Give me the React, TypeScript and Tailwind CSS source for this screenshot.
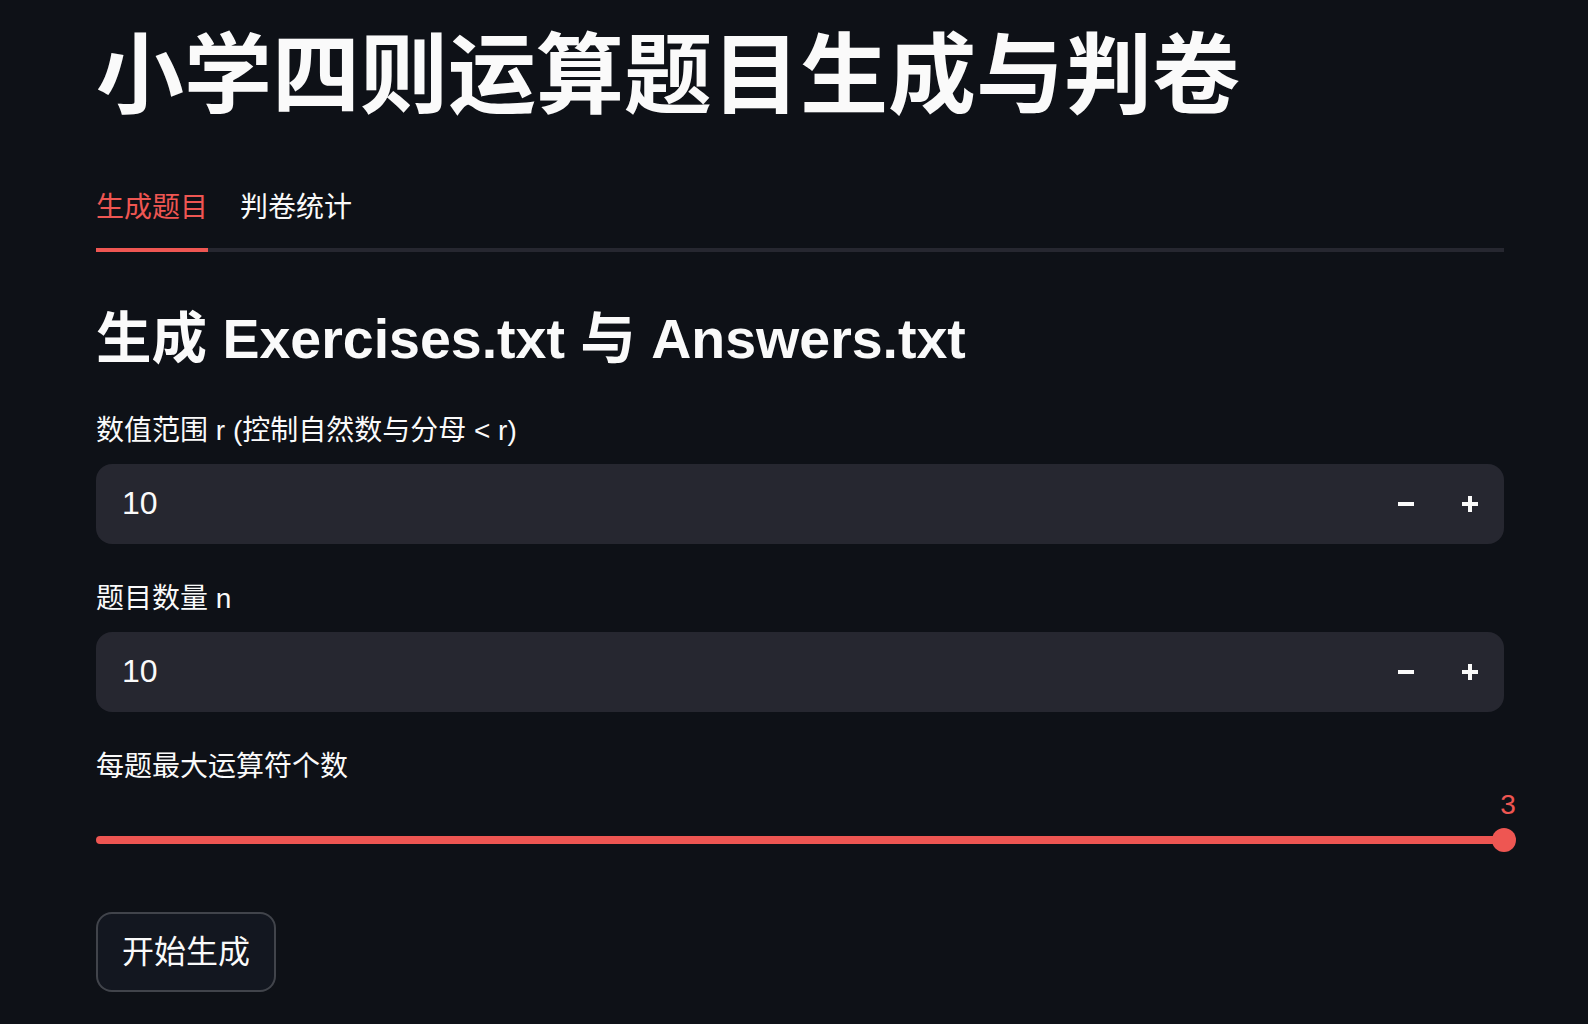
import React from "react";

const FONT = { fontFamily: '"Liberation Sans", "Noto Sans CJK SC", sans-serif' };

function Minus() {
  return (
    <svg width="16" height="16" viewBox="0 0 16 16" aria-hidden="true">
      <rect x="0" y="6" width="16" height="4" fill="#fafafa" />
    </svg>
  );
}

function Plus() {
  return (
    <svg width="16" height="16" viewBox="0 0 16 16" aria-hidden="true">
      <rect x="0" y="6" width="16" height="4" fill="#fafafa" />
      <rect x="6" y="0" width="4" height="16" fill="#fafafa" />
    </svg>
  );
}

function NumberInput({ value }: { value: string }) {
  return (
    <div className="flex h-[80px] items-center rounded-[16px] bg-[#262730] pr-[2px]">
      <span className="flex-1 pb-[2px] pl-[26px] text-[32px] text-[#fafafa]">{value}</span>
      <button type="button" className="flex h-full w-[64px] items-center justify-center">
        <Minus />
      </button>
      <button type="button" className="flex h-full w-[64px] items-center justify-center">
        <Plus />
      </button>
    </div>
  );
}

function Label({ children }: { children: React.ReactNode }) {
  return <div className="flex h-[44px] items-center text-[28px] text-[#fafafa]">{children}</div>;
}

export default function App() {
  return (
    <div className="min-h-screen bg-[#0e1117] text-[#fafafa]" style={FONT}>
      <div className="ml-[96px] w-[1408px] pt-[23px] pb-[40px]">
        <h1 className="text-[88px] font-bold leading-[106px]">小学四则运算题目生成与判卷</h1>

        {/* tabs */}
        <div className="relative mt-[39px] flex gap-[32px]">
          <div className="absolute bottom-0 left-0 right-0 h-[4px] bg-[#262730]" />
          <div className="relative flex h-[84px] items-center pb-[4px] text-[28px] text-[#ee5652]">
            生成题目
            <div className="absolute bottom-0 left-0 right-0 h-[4px] bg-[#ee5652]" />
          </div>
          <div className="flex h-[84px] items-center pb-[4px] text-[28px]">判卷统计</div>
        </div>

        <h3 className="mt-[54px] text-[55.5px] font-bold leading-[67px]">生成 Exercises.txt 与 Answers.txt</h3>

        <div className="mt-[36px]">
          <Label>数值范围 r (控制自然数与分母 &lt; r)</Label>
        </div>
        <div className="mt-[11px]">
          <NumberInput value="10" />
        </div>

        <div className="mt-[33px]">
          <Label>题目数量 n</Label>
        </div>
        <div className="mt-[11px]">
          <NumberInput value="10" />
        </div>

        <div className="mt-[33px]">
          <Label>每题最大运算符个数</Label>
        </div>

        {/* slider */}
        <div className="relative h-[80px]">
          <div className="absolute left-0 right-0 top-[47px] h-[8px] rounded-full bg-[#ee5652]" />
          <div className="absolute right-[-12px] top-[39px] h-[24px] w-[24px] rounded-full bg-[#ee5652]" />
          <div className="absolute right-[-16px] top-[-1px] w-[24px] text-center text-[28px] leading-[34px] text-[#ee5652]">
            3
          </div>
        </div>

        <button
          type="button"
          className="mt-[43px] flex h-[80px] w-[180px] items-center justify-center rounded-[16px] border-2 border-[rgba(250,250,250,0.2)] bg-[#131720] text-[32px] text-[#fafafa]"
        >
          开始生成
        </button>
      </div>
    </div>
  );
}
